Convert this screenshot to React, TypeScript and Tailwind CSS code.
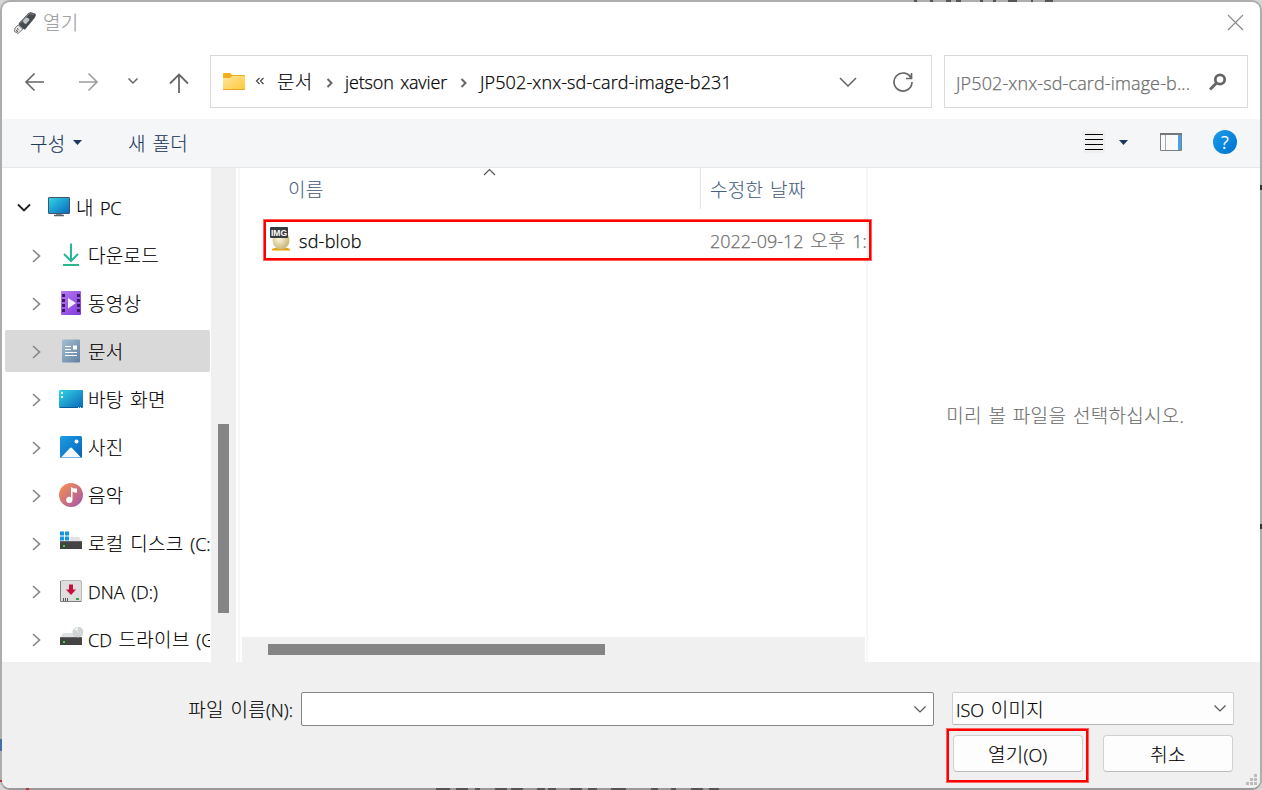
import type { ReactNode } from "react";
import clsx from "clsx";

interface TextProps {
  children: string;
  className?: string;
}

interface TreeItem {
  label: string;
  icon: ReactNode;
  selected?: boolean;
}

// Hangul and Latin runs use different faces, so they are sized separately
function Text({ children, className }: TextProps) {
  return (
    <span className={clsx("whitespace-pre", className)}>
      {children.split(/([가-힣]+)/).map((part, i) =>
        /[가-힣]/.test(part) ? (
          <span key={i} className="text-[19px] tracking-[0.3px] [-webkit-text-stroke:0.1px]">{part}</span>
        ) : (
          <span key={i} className="[-webkit-text-stroke:0.25px]">{part}</span>
        )
      )}
    </span>
  );
}

function Chevron({ className, d, width = 12, height = 12, stroke = 1.5 }: { className?: string; d: string; width?: number; height?: number; stroke?: number }) {
  return (
    <svg className={clsx("shrink-0", className)} width={width} height={height} viewBox={`0 0 ${width} ${height}`} fill="none" stroke="currentColor" strokeWidth={stroke}>
      <path d={d} />
    </svg>
  );
}

function UsbIcon() {
  return (
    <svg width="24" height="24" viewBox="0 0 24 24" className="relative left-[-1px] shrink-0">
      <path d="M3 17l3-3 5 4-5 4.500-3.500-2z" fill="#e6e6e6" stroke="#777" />
      <path d="M5 17.500l1.500 1M4 19.500l2 1" stroke="#333" />
      <path d="M7 12L16.500 2q1-1 2.500-.800l4 1.300q1.300.800.600 2.500l-1 2L13.500 18q-1 1-2 0l-4-3.500q-1.500-1-.500-2.500z" fill="#464b50" />
      <path d="M8 12.500L17.500 2.500l4.500 1" stroke="#7e8286" fill="none" />
      <path d="M11 9.500L14 6.500q3 0 3.500 2.500l-3.500 4q-3-.500-3-3.500z" fill="#c3c5c6" />
    </svg>
  );
}

function FolderIcon() {
  return (
    <svg width="22" height="18" viewBox="0 0 22 18" className="shrink-0">
      <defs>
        <linearGradient id="folder" x1="0" y1="0" x2="1" y2="1">
          <stop stopColor="#ffe69a" />
          <stop offset="1" stopColor="#fdc93b" />
        </linearGradient>
      </defs>
      <path d="M0 1q0-1 1-1h6l2 2h12q1 0 1 1v3H0z" fill="#f4ae1c" />
      <path d="M0 5h7l2-2h13v13q0 1-1 1H1q-1 0-1-1z" fill="url(#folder)" />
      <path d="M0 16.500h22" stroke="#e8a823" />
    </svg>
  );
}

function MonitorIcon() {
  return (
    <svg width="24" height="20" viewBox="0 0 24 20">
      <defs>
        <linearGradient id="screen" x1="0" y1="0" x2="1" y2="1">
          <stop stopColor="#33d6e6" />
          <stop offset="1" stopColor="#0767bd" />
        </linearGradient>
      </defs>
      <path d="M9 16h6v2H9z" fill="#8a9096" />
      <path d="M7 18.500h10" stroke="#586068" strokeWidth="1.500" />
      <rect x="1.500" y=".500" width="21" height="16" rx=".500" fill="url(#screen)" stroke="#40566a" />
    </svg>
  );
}

function DownloadIcon() {
  return (
    <svg width="24" height="24" viewBox="0 0 24 24" fill="none" strokeWidth="2">
      <path d="M12 .500v17M5 11l7 7 7-7" stroke="#25b796" />
      <path d="M4 22h16" stroke="#28b98f" />
    </svg>
  );
}

function VideoIcon() {
  return (
    <svg width="24" height="24" viewBox="0 0 24 24">
      <defs>
        <linearGradient id="video" x1="0" y1="0" x2="1" y2="1">
          <stop stopColor="#b77af0" />
          <stop offset="1" stopColor="#8039dc" />
        </linearGradient>
      </defs>
      <rect x="2" width="20" height="24" rx="1" fill="url(#video)" />
      <path d="M3 3h3v3H3zm0 5h3v3H3zm0 5h3v3H3zm0 5h3v3H3zM18 3h3v3h-3zm0 5h3v3h-3zm0 5h3v3h-3zm0 5h3v3h-3z" fill="#3c1b68" />
      <path d="M9 7l8 5-8 5.500z" fill="#f3ecfb" />
    </svg>
  );
}

function DocumentIcon() {
  return (
    <svg width="24" height="24" viewBox="0 0 24 24">
      <defs>
        <linearGradient id="document" x1="0" y1="0" x2="1" y2="1">
          <stop stopColor="#a6bed4" />
          <stop offset="1" stopColor="#6180a2" />
        </linearGradient>
      </defs>
      <rect x="3" y=".500" width="18" height="23" rx="1" fill="url(#document)" />
      <path d="M6 7.500h6M6 10.500h6M6 13.500h12M6 16.500h12" stroke="#fff" strokeWidth="1.200" />
      <path d="M14 6.500h4v4h-4z" fill="#fff" />
    </svg>
  );
}

function DesktopIcon() {
  return (
    <svg width="24" height="20" viewBox="0 0 24 20">
      <defs>
        <linearGradient id="desktop" x1="0" y1="0" x2="1" y2="1">
          <stop stopColor="#33d4e4" />
          <stop offset="1" stopColor="#0866b9" />
        </linearGradient>
      </defs>
      <rect y="1" width="24" height="18" rx="1" fill="url(#desktop)" />
      <path d="M2 3h2v2H2zm0 4h2v2H2z" fill="#e9fbff" />
      <path d="M1 18.500h18" stroke="#075a9e" />
      <path d="M19 18.500h4" stroke="#d7ecff" strokeDasharray="1 1" />
    </svg>
  );
}

function PictureIcon() {
  return (
    <svg width="24" height="24" viewBox="0 0 24 24">
      <defs>
        <linearGradient id="picture" x1="0" y1="0" x2="1" y2="1">
          <stop stopColor="#1d9de6" />
          <stop offset="1" stopColor="#0663b7" />
        </linearGradient>
      </defs>
      <rect x="1" y="1" width="22" height="22" rx="1.500" fill="url(#picture)" />
      <circle cx="17.500" cy="6.500" r="2" fill="#fff" />
      <path d="M2 22.500L11 13q1-1 2 0l9 9.500z" fill="#f2f8fe" />
    </svg>
  );
}

function MusicIcon() {
  return (
    <svg width="24" height="24" viewBox="0 0 24 24">
      <defs>
        <linearGradient id="music" x1="0" y1="0" x2="1" y2="1">
          <stop offset=".1" stopColor="#f28d56" />
          <stop offset=".9" stopColor="#ab5aa3" />
        </linearGradient>
      </defs>
      <circle cx="12" cy="12" r="12" fill="url(#music)" />
      <path d="M12 4q3 2 6 1.500v4q-3 .500-4.500-1V17a3.200 3.200 0 1 1-1.500-2.800z" fill="#fff" />
    </svg>
  );
}

function DriveBase() {
  return (
    <>
      <path d="M4 6h16l3 5H1z" fill="#dfe1e3" />
      <path d="M1 10.500h22V18H1z" fill="#444" />
      <path d="M1 10.500h22" stroke="#666" />
      <path d="M4 14h2v2H4z" fill="#2fdc31" />
    </>
  );
}

function LocalDiskIcon() {
  return (
    <svg width="24" height="24" viewBox="0 0 24 24">
      <DriveBase />
      <path d="M1 0h10v10H1z" fill="#fff" />
      <path d="M1 .500h4v4H1zm5 0h4v4H6zm-5 5h4v4H1zm5 0h4v4H6z" fill="#1594df" />
    </svg>
  );
}

function DnaIcon() {
  return (
    <svg width="24" height="24" viewBox="0 0 24 24">
      <rect x="1.500" y="1.500" width="21" height="21" rx="1.500" fill="#dedede" stroke="#b8b8b8" />
      <path d="M1.500 2v20.500h21" stroke="#7e7e7e" fill="none" />
      <path d="M10 5.500h4v5h3L12 16l-5-5.500h3z" fill="#c90f3e" />
      <path d="M4.500 19v3m2-3v3m2-3v3" stroke="#555" />
      <path d="M17 19h3v2h-3z" fill="#35a14b" />
    </svg>
  );
}

function CdIcon() {
  return (
    <svg width="24" height="24" viewBox="0 0 24 24">
      <DriveBase />
      <circle cx="19" cy="5" r="5" fill="#d0d5d6" stroke="#b8bebf" strokeWidth=".500" />
      <path d="M19 5l-4-3q2-2 4-1.800z" fill="#eef1f2" />
      <circle cx="19" cy="5" r="1.300" fill="#fff" stroke="#aaa" strokeWidth=".500" />
    </svg>
  );
}

function ImgFileIcon() {
  return (
    <svg width="24" height="26" viewBox="0 0 24 26" className="relative top-[-1px] left-px shrink-0">
      <defs>
        <radialGradient id="egg" cx=".4" cy=".4" r=".6">
          <stop stopColor="#fffbe0" />
          <stop offset="1" stopColor="#cbb67c" />
        </radialGradient>
      </defs>
      <path d="M2 23q4-2 9-1 5-1 9 1v1.500H2z" fill="#e6a30b" />
      <ellipse cx="11" cy="14" rx="8.500" ry="9.500" fill="url(#egg)" />
      <rect y="1" width="18" height="11" rx="1" fill="#373c41" />
      <text x="9" y="9.500" textAnchor="middle" fontSize="8.500" fontWeight="700" fill="#fff" fontFamily="Liberation Sans, sans-serif">IMG</text>
    </svg>
  );
}

const TREE: TreeItem[] = [
  { label: "다운로드", icon: <DownloadIcon /> },
  { label: "동영상", icon: <VideoIcon /> },
  { label: "문서", icon: <DocumentIcon />, selected: true },
  { label: "바탕 화면", icon: <DesktopIcon /> },
  { label: "사진", icon: <PictureIcon /> },
  { label: "음악", icon: <MusicIcon /> },
  { label: "로컬 디스크 (C:", icon: <LocalDiskIcon /> },
  { label: "DNA (D:)", icon: <DnaIcon /> },
  { label: "CD 드라이브 (G", icon: <CdIcon /> },
];

function TitleBar() {
  return (
    <div className="flex h-[42px] shrink-0 items-center justify-between pl-[11px] pr-[16px]">
      <div className="flex items-center gap-[6px] text-[#999]">
        <UsbIcon />
        <Text>열기</Text>
      </div>
      <Chevron className="mb-[2px] text-[#8a8a8a]" width={17} height={17} stroke={1.2} d="M1 1l15 15M16 1L1 16" />
    </div>
  );
}

function AddressBar() {
  return (
    <div className="flex h-[75px] shrink-0 items-start pt-[11px] pr-[12px]">
      <div className="flex h-[53px] w-[208px] items-center pl-[22px] text-[#666]">
        <Chevron width={20} height={20} stroke={1.6} d="M20 10H2M10.500 1.500L2 10l8.500 8.500" />
        <Chevron className="ml-[35px] text-[#9d9d9d]" width={20} height={20} stroke={1.6} d="M0 10h18M9.500 1.500L18 10l-8.500 8.500" />
        <Chevron className="mb-[2px] ml-[28px]" width={12} height={8} d="M1.500 1.500L6 6l4.500-4.500" />
        <Chevron className="mt-[2px] ml-[30px]" width={20} height={20} stroke={1.8} d="M10 20V2M1 10.500L10 1.500l9 9" />
      </div>
      <div className="flex h-[53px] w-[722px] items-center border border-[#d9d9d9] pl-[12px]">
        <FolderIcon />
        <Chevron className="mb-[2px] ml-[10px] text-[#444]" width={10} height={8} stroke={1.2} d="M4.500 1L1.500 4l3 3M8.500 1l-3 3 3 3" />
        <Text className="ml-[12px] w-[36px]">문서</Text>
        <Chevron className="mt-[2px] ml-[13px] text-[#666]" width={8} height={10} stroke={2} d="M1.500 1l4 4-4 4" />
        <Text className="ml-[11px] w-[103px] tracking-[-0.15px]">jetson xavier</Text>
        <Chevron className="mt-[2px] ml-[12px] text-[#666]" width={8} height={10} stroke={2} d="M1.500 1l4 4-4 4" />
        <Text className="ml-[12px] grow tracking-[0.12px]">JP502-xnx-sd-card-image-b231</Text>
        <Chevron className="text-[#666]" width={18} height={10} d="M1 1l8 8 8-8" />
        <svg className="mr-[17px] ml-[35px] shrink-0" width="22" height="22" viewBox="0 0 22 22" fill="none" stroke="#666" strokeWidth="1.700">
          <path d="M19.200 7.300A9 9 0 1 0 20 11M19.500 2v5.500H14" />
        </svg>
      </div>
      <div className="ml-[12px] flex h-[53px] w-[304px] items-center border border-[#d9d9d9] pl-[11px]">
        <Text className="mt-[2px] w-[253px] tracking-[0.13px] text-[#6d6d6d]">JP502-xnx-sd-card-image-b...</Text>
        <svg width="18" height="18" viewBox="0 0 18 18" fill="none" stroke="#666">
          <circle cx="11" cy="6.500" r="4.700" strokeWidth="2.800" />
          <path d="M7.500 10L1 16.500" strokeWidth="3" />
        </svg>
      </div>
    </div>
  );
}

function CommandBar() {
  return (
    <div className="flex h-[49px] shrink-0 items-center border-b border-[#e5e7e9] bg-[#f4f6f8] pb-[2px] pl-[28px] text-[#1e395b]">
      <Text className="mt-[3px] w-[35px]">구성</Text>
      <svg className="ml-[8px]" width="9" height="5"><path d="M0 0h9L4.500 5z" fill="currentColor" /></svg>
      <Text className="mt-[3px] ml-[46px] grow">새 폴더</Text>
      <svg width="22" height="22" viewBox="0 0 22 22" stroke="#000">
        <path d="M0 0h22v22H0z" fill="#f0f0f0" stroke="none" />
        <path d="M2 3.500h18M2 8.500h18M2 13.500h18M2 18.500h18" />
      </svg>
      <svg className="ml-[14px]" width="9" height="5"><path d="M0 0h9L4.500 5z" fill="currentColor" /></svg>
      <svg className="ml-[32px]" width="22" height="18" viewBox="0 0 22 18">
        <path d="M.500 1h21v16.500H.500z" fill="#fafafa" stroke="#7c8186" />
        <path d="M0 1h22" stroke="#72777c" strokeWidth="2" />
        <path d="M5.500 2v15" stroke="#aaa" />
        <path d="M18 2h3v15h-3z" fill="#47a0ea" />
      </svg>
      <div className="mr-[23px] ml-[31px] flex size-6 items-center justify-center rounded-full bg-gradient-to-br from-[#1b9de8] to-[#0071d2] text-[18px] leading-none font-normal text-white">?</div>
    </div>
  );
}

function NavigationPane() {
  return (
    <div className="flex w-[236px] shrink-0 border-r-2 border-white">
      <div className="w-[209px] overflow-hidden pt-[15px]">
        <div className="flex h-12 items-center pl-[15px]">
          <Chevron className="text-[#222]" width={14} height={9} stroke={1.8} d="M1 1.500l6 6 6-6" />
          <div className="ml-[16px] flex"><MonitorIcon /></div>
          <Text className="mt-px ml-[5px] tracking-[-0.4px]">내 PC</Text>
        </div>
        {TREE.map((item) => (
          <div key={item.label} className="flex h-12 items-center pl-[3px]">
            <div className={clsx("flex h-[42px] w-[205px] items-center overflow-hidden rounded-[2px] pl-[27px]", item.selected && "bg-[#d9d9d9]")}>
              <Chevron className="mt-[2px] text-[#888]" width={9} height={14} stroke={1.7} d="M1 1l6.500 6L1 13" />
              <div className="ml-[18px] flex w-6 shrink-0">{item.icon}</div>
              <Text className="mt-px ml-[5px]">{item.label}</Text>
            </div>
          </div>
        ))}
      </div>
      <div className="w-[25px] bg-[#f0f0f0] pt-[256px] pl-[7px]">
        <div className="h-[189px] w-[11px] bg-[#858585]" />
      </div>
    </div>
  );
}

function FileList() {
  return (
    <div className="flex w-[628px] shrink-0 flex-col border-l-2 border-[#f7f7f7] pl-[2px]">
      <div className="flex h-[41px] text-[#4a5f7f]">
        <div className="relative flex w-[459px] items-center border-r border-[#e3e3e3] pl-[46px]">
          <Text className="mt-[2px]">이름</Text>
          <Chevron className="absolute top-0 left-[241px] text-[#555]" width={13} height={8} stroke={1.2} d="M1 7l5.500-5.500L12 7" />
        </div>
        <div className="flex items-center pl-[9px]"><Text className="mt-[2px]">수정한 날짜</Text></div>
      </div>
      <div className="relative mt-[10px] flex h-[42px] items-center pl-[27px]">
        <ImgFileIcon />
        <Text className="mt-[2px] ml-[6px] w-[411px] tracking-[0.25px]">sd-blob</Text>
        <Text className="mt-[2px] w-[156px] shrink-0 tracking-[-0.03px] text-[#6d6d6d]">2022-09-12 오후 1:</Text>
        <div className="absolute top-0 left-[21px] z-10 h-[42px] w-[609px] border border-[#ff6060]">
          <div className="h-full border-2 border-[#f00]" />
        </div>
      </div>
      <div className="mt-auto h-[25px] w-[623px] bg-[#f0f0f0] pt-[7px] pl-[26px]">
        <div className="h-[11px] w-[337px] bg-[#858585]" />
      </div>
    </div>
  );
}

function Footer() {
  return (
    <div className="relative h-[126px] shrink-0 bg-[#f0f0f0] pt-[30px] pr-[26px]">
      <div className="flex items-start justify-end">
        <Text className="mt-[6px] mr-[8px]">파일 이름(N):</Text>
        <div className="flex h-[34px] w-[633px] items-center justify-end rounded-[2px] border border-[#868686] bg-white pr-[7px]">
          <Chevron className="text-[#555]" width={12} height={7} stroke={1.2} d="M.500.500L6 6l5.500-5.500" />
        </div>
        <div className="ml-[18px] flex h-[33px] w-[282px] items-center justify-between rounded-[2px] border border-[#cfcfcf] border-b-[#b5b5b5] bg-[#fdfdfd] pr-[7px] pl-[3px]">
          <Text className="mt-[2px]">ISO 이미지</Text>
          <Chevron className="text-[#555]" width={12} height={7} stroke={1.2} d="M.500.500L6 6l5.500-5.500" />
        </div>
      </div>
      <div className="mt-[2px] flex justify-end">
        <div className="h-[55px] w-[143px] border border-[#ff6060]">
          <div className="flex h-full justify-center border-2 border-[#f00] pt-[4px]">
            <button className="flex h-[37px] w-[130px] items-center justify-center rounded-[4px] border border-[#d0d0d0] border-b-[#bbb] bg-[#fdfdfd]">
              <Text className="mt-[2px]">열기(O)</Text>
            </button>
          </div>
        </div>
        <button className="mt-[7px] mr-px ml-[14px] flex h-[37px] w-[130px] items-center justify-center rounded-[4px] border border-[#d0d0d0] border-b-[#bbb] bg-[#fdfdfd]">
          <Text className="mt-[2px]">취소</Text>
        </button>
      </div>
      {/* Resize grip */}
      <svg className="absolute right-[2px] bottom-[2px]" width="12" height="12" fill="#bcbcbc">
        <path d="M8 0h3v3H8zM4 4h3v3H4zm4 0h3v3H8zM0 8h3v3H0zm4 0h3v3H4zm4 0h3v3H8z" />
      </svg>
    </div>
  );
}

export default function App() {
  return (
    <div className="relative h-[790px] w-[1262px] overflow-hidden bg-[#d5d5d5] font-['Open_Sans','Noto_Sans_CJK_KR',sans-serif] text-[18px] leading-6 font-light text-black [word-spacing:2px]">
      <div className="flex h-full flex-col overflow-hidden rounded-[10px] border-2 border-[#adadad] border-b-[#999] bg-white">
        <TitleBar />
        <AddressBar />
        <CommandBar />
        <div className="flex h-[494px] shrink-0">
          <NavigationPane />
          <FileList />
          <div className="flex grow items-center justify-center border-l-2 border-[#f7f7f7] text-[#6d6d6d]">
            <Text className="mt-[2px] ml-[2px]">미리 볼 파일을 선택하십시오.</Text>
          </div>
        </div>
        <Footer />
      </div>
      {/* Slivers of the window behind */}
      <svg className="absolute top-0 left-0" width="1262" height="790" fill="none">
        <path d="M914 1h3m13 0h3m13 0h5m5 0h5m19 0h3m10 0h3m12 0h9m14 0h2m12 0h8" stroke="#555" strokeWidth="2" />
        <path d="M436 789h14m6 0h12m7 0h5m15 0h12m4 0h12m14 0h8m3 0h8m14 0h12m6 0h9m14 0h15m25 0h7m13 0h5m15 0h12m6 0h10" stroke="#555" strokeWidth="2" />
        <path d="M1261 185v5m0 334v5" stroke="#333" strokeWidth="2" />
        <path d="M1 739v12" stroke="#456f9f" strokeWidth="2" />
        <path d="M0 781h2m24 8h3" stroke="#b83232" strokeWidth="2" />
      </svg>
    </div>
  );
}
